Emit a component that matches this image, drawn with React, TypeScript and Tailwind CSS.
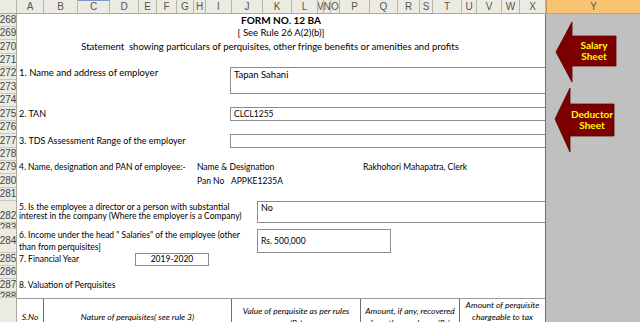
import React from "react";

const COLS: { l: string; w: string }[] = [
  { l: "A", w: "w-[27px]" },
  { l: "B", w: "w-[34px]" },
  { l: "C", w: "w-[32px]" },
  { l: "D", w: "w-[29px]" },
  { l: "E", w: "w-[18px]" },
  { l: "F", w: "w-[20px]" },
  { l: "G", w: "w-[17px]" },
  { l: "H", w: "w-[12px]" },
  { l: "I", w: "w-[26px]" },
  { l: "J", w: "w-[31px]" },
  { l: "K", w: "w-[29px]" },
  { l: "L", w: "w-[26px]" },
  { l: "M", w: "w-[6px]" },
  { l: "N", w: "w-[7px]" },
  { l: "O", w: "w-[9px]" },
  { l: "P", w: "w-[30px]" },
  { l: "Q", w: "w-[28px]" },
  { l: "R", w: "w-[22px]" },
  { l: "S", w: "w-[13px]" },
  { l: "T", w: "w-[29px]" },
  { l: "U", w: "w-[15px]" },
  { l: "V", w: "w-[25px]" },
  { l: "W", w: "w-[18px]" },
  { l: "X", w: "w-[26px]" },
];

// row headers, heights follow the sheet blocks below
const ROWS: { n: string; h: string; a?: string }[] = [
  { n: "268", h: "h-[13px]" },
  { n: "269", h: "h-[13px]" },
  { n: "270", h: "h-[14px]" },
  { n: "271", h: "h-[13px]" },
  { n: "272", h: "h-[13px]" },
  { n: "273", h: "h-[14px]" },
  { n: "274", h: "h-[13px]" },
  { n: "275", h: "h-[14px]" },
  { n: "276", h: "h-[13px]" },
  { n: "277", h: "h-[14px]" },
  { n: "278", h: "h-[13px]" },
  { n: "279", h: "h-[13px]" },
  { n: "280", h: "h-[14px]" },
  { n: "281", h: "h-[13px]" },
  { n: "282", h: "h-[22px]", a: "items-end pb-[1px]" },
  { n: "283", h: "h-[6px]", a: "items-start" },
  { n: "284", h: "h-[24px]" },
  { n: "285", h: "h-[13px]" },
  { n: "286", h: "h-[13px]" },
  { n: "287", h: "h-[13px]" },
  { n: "288", h: "h-[6px]", a: "items-start" },
];

const box = "border border-[#8c8c8c]";

export default function App() {
  return (
    <div className="relative w-[640px] h-[322px] overflow-hidden bg-white text-black font-['Lato','Open_Sans',sans-serif]">
      {/* column headers */}
      <div className="flex h-[14px] border-b border-[#a9a99a] bg-[#ecebe2] font-['Liberation_Sans',sans-serif] text-[10px] text-[#555]">
        <div className="w-[17px] border-r border-[#b7b6a6]" />
        {COLS.map((c) => (
          <div
            key={c.l}
            className={`${c.w} ${c.l === "C" ? "border-t border-t-[#7d98c8]" : ""} border-r border-[#b7b6a6] flex items-center justify-center leading-none overflow-hidden`}
          >
            {c.l}
          </div>
        ))}
        <div className="flex-1 bg-[#f8c472] border-l border-[#c8955a] flex items-center justify-center leading-none text-[#555]">Y</div>
      </div>

      <div className="flex h-[308px]">
        {/* row numbers */}
        <div className="w-[17px] shrink-0 flex flex-col bg-[#ecebe2] border-r border-[#a9a99a] font-['Liberation_Sans',sans-serif] text-[10px] text-[#444]">
          {ROWS.map((r) => (
            <div
              key={r.n}
              className={`${r.h} ${r.a ?? "items-center"} shrink-0 flex justify-center leading-[10px] border-b border-[#c9c8b8] overflow-hidden`}
            >
              {r.n}
            </div>
          ))}
          <div className="flex-1" />
        </div>

        {/* sheet */}
        <div className="w-[529px] shrink-0 flex flex-col overflow-hidden border-r border-[#6f6f6f] text-[9.5px]">
          <div className="h-[13px] shrink-0 flex items-center justify-center font-bold text-[10px]">FORM NO. 12 BA</div>
          <div className="h-[13px] shrink-0 flex items-center justify-center">[ See Rule 26 A(2)(b)]</div>
          <div className="h-[14px] shrink-0 flex items-center justify-center whitespace-pre pr-[22px]">
            Statement  showing particulars of perquisites, other fringe benefits or amenities and profits
          </div>
          <div className="h-[13px] shrink-0" />

          <div className="h-[27px] shrink-0 flex">
            <div className="w-[213px] pl-[2px] h-[13px] flex items-center">1. Name and address of employer</div>
            <div className={`flex-1 ${box} border-r-0 px-[3px] leading-[13px]`}>Tapan Sahani</div>
          </div>
          <div className="h-[13px] shrink-0" />

          <div className="h-[14px] shrink-0 flex">
            <div className="w-[213px] pl-[2px] flex items-center text-[9px]">2. TAN</div>
            <div className={`flex-1 ${box} border-r-0 px-[3px] flex items-center text-[8.5px]`}>CLCL1255</div>
          </div>
          <div className="h-[13px] shrink-0" />

          <div className="h-[14px] shrink-0 flex">
            <div className="w-[213px] pl-[2px] flex items-center text-[9px]">3. TDS Assessment Range of the employer</div>
            <div className={`flex-1 ${box} border-r-0`} />
          </div>
          <div className="h-[13px] shrink-0" />

          <div className="h-[13px] shrink-0 flex items-center text-[8.5px]">
            <div className="w-[180px] pl-[2px] whitespace-nowrap">4. Name, designation and PAN of employee:-</div>
            <div className="w-[166px] whitespace-nowrap">Name &amp; Designation</div>
            <div className="whitespace-nowrap">Rakhohori Mahapatra, Clerk</div>
          </div>
          <div className="h-[14px] shrink-0 flex items-center text-[8.5px]">
            <div className="w-[180px]" />
            <div className="w-[34px] whitespace-nowrap">Pan No</div>
            <div>APPKE1235A</div>
          </div>
          <div className="h-[13px] shrink-0" />

          <div className="h-[22px] shrink-0 flex">
            <div className="w-[240px] pl-[2px] flex flex-col justify-center leading-[9.5px] text-[8.5px] whitespace-nowrap">
              <span>5. Is the employee a director or a person with substantial</span>
              <span>interest in the company (Where the employer is a Company)</span>
            </div>
            <div className={`flex-1 ${box} border-r-0 px-[3px] leading-[12px] text-[9px]`}>No</div>
          </div>
          <div className="h-[6px] shrink-0" />

          <div className="h-[24px] shrink-0 flex">
            <div className="w-[240px] pl-[2px] flex flex-col justify-center leading-[12.5px] text-[8.5px] whitespace-nowrap">
              <span>6. Income under the head &quot; Salaries&quot; of the employee (other</span>
              <span>than from perquisites]</span>
            </div>
            <div className={`w-[134px] ${box} px-[3px] flex items-center text-[8.5px]`}>Rs. 500,000</div>
          </div>

          <div className="h-[13px] shrink-0 flex text-[8.5px]">
            <div className="w-[118px] pl-[2px] flex items-center">7. Financial Year</div>
            <div className={`w-[74px] ${box} flex items-center justify-center`}>2019-2020</div>
          </div>
          <div className="h-[13px] shrink-0" />
          <div className="h-[13px] shrink-0 pl-[2px] flex items-center text-[8.5px]">8. Valuation of Perquisites</div>
          <div className="h-[6px] shrink-0" />

          {/* perquisites table header, runs past the window */}
          <div className="flex-1 min-h-0 flex border-t border-[#9a9a9a] italic text-[8.5px] leading-[12px] text-center">
            <div className="w-[27px] border-r border-[#6f6f6f] pt-[12px]">S.No</div>
            <div className="w-[188px] border-r border-[#6f6f6f] pt-[12px]">Nature of perquisites( see rule 3)</div>
            <div className="w-[129px] border-r border-[#6f6f6f] pt-[6px]">
              Value of perquisite as per rules
              <br />
              (Rs)
            </div>
            <div className="w-[99px] border-r border-[#6f6f6f] pt-[6px] whitespace-nowrap">
              Amount, if any, recovered
              <br />
              from the employee (Rs)
            </div>
            <div className="flex-1">
              Amount of perquisite
              <br />
              chargeable to tax
              <br />
              (Rs)
            </div>
          </div>
        </div>

        {/* column Y with the links to other sheets */}
        <div className="relative flex-1 bg-[#c0c0c0]">
          <svg width="94" height="308" viewBox="0 0 94 308" className="absolute inset-0">
            <polygon points="10,38 26,8 26,22 70,22 70,52 26,52 26,68" fill="#7d0000" stroke="#5c0000" strokeWidth="0.8" />
            <polygon points="9,105 24,74 24,90 68,90 68,122 24,122 24,138" fill="#7d0000" stroke="#5c0000" strokeWidth="0.8" />
          </svg>
          <div className="absolute left-[26px] top-[22px] w-[44px] h-[30px] flex flex-col items-center justify-center text-[10px] leading-[11px] font-bold text-[#ffff00]">
            <span>Salary</span>
            <span>Sheet</span>
          </div>
          <div className="absolute left-[24px] top-[90px] w-[44px] h-[32px] flex flex-col items-center justify-center text-[10px] leading-[11px] font-bold text-[#ffff00]">
            <span>Deductor</span>
            <span>Sheet</span>
          </div>
        </div>
      </div>
    </div>
  );
}
